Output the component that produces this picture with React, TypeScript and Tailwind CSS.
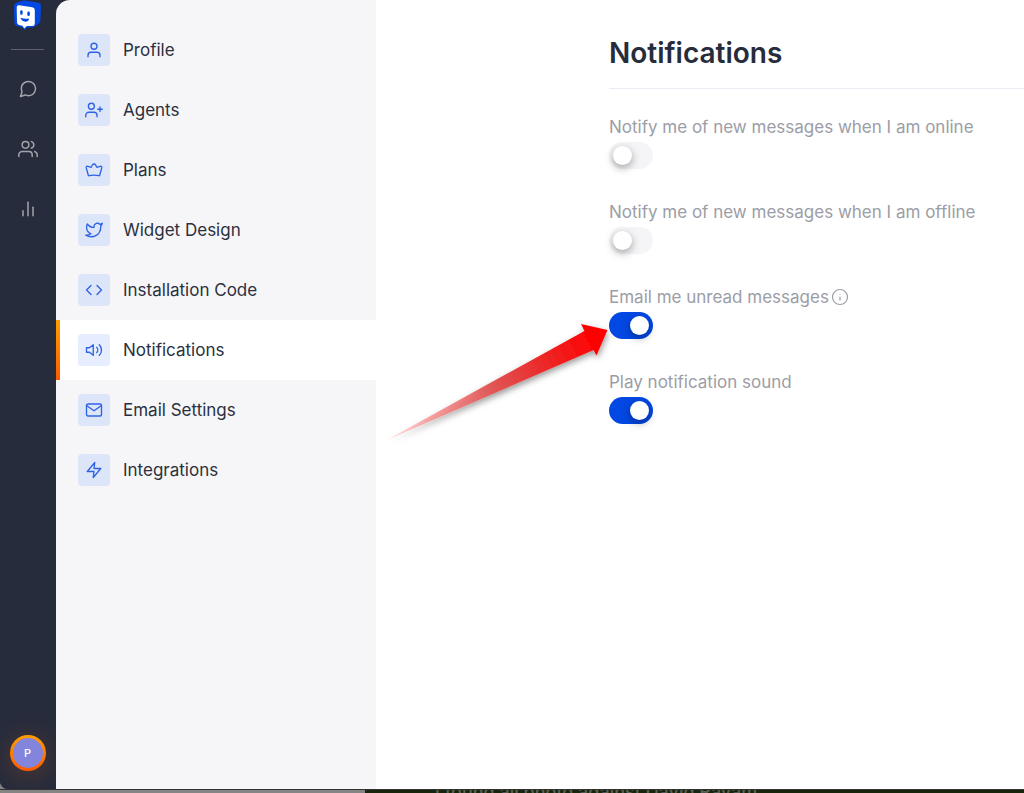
import { useState } from "react";
import {
    FiBarChart2,
    FiCode,
    FiInfo,
    FiMail,
    FiMessageCircle,
    FiTwitter,
    FiUser,
    FiUserPlus,
    FiUsers,
    FiVolume2,
    FiZap,
} from "react-icons/fi";

const CrownIcon = () => (
    <svg viewBox="0 0 24 24" className="size-[18px]" fill="none" stroke="currentColor" strokeWidth="1.6" strokeLinecap="round" strokeLinejoin="round">
        <path d="M5.4 19.6Q4.6 19.8 4.4 19L1.7 9.2C1.3 7.4 2.2 6.6 3.8 7.1L8.2 8.4 9.8 5.4C10.8 3.6 13.2 3.6 14.2 5.4L15.8 8.4 20.2 7.1C21.8 6.6 22.7 7.4 22.3 9.2L19.6 19Q19.4 19.8 18.6 19.6C14.2 18.7 9.800 18.7 5.4 19.6Z" />
    </svg>
);

const Logo = () => (
    <svg viewBox="0 0 27 30" className="h-[30px] w-[27px]" aria-label="Logo">
        <path d="M3 2.5 9.5 0.3 24 2.6Q27 3.2 27 6L26.4 20.5Q26.2 22.5 24.5 23.8L20 26.9 13 27.8 10.3 30 8 27.6 3 26Q0.5 25 0.3 22.5L0 7Q0 3.8 3 2.5Z" fill="#0348e3" />
        <path d="M5 5.2 18.4 7.3Q20.8 7.8 20.8 10V23.5Q20.8 26 18.4 26H12.8L10.4 28.6 8.4 25.8 5 25Q3 24.4 3 22.2L2.7 7.3Q2.8 5 5 5.2Z" fill="#fff" />
        <path d="M7.4 11.4V13.4M14.6 12.8V14.8" stroke="#0348e3" strokeWidth="2.5" strokeLinecap="round" />
        <path d="M6.4 17.8Q11 19.400 15.2 18.600Q14.2 22 11.2 21.8Q7.600 21.400 6.4 17.800Z" fill="#0348e3" />
    </svg>
);

const menu = [
    { name: "Profile", icon: <FiUser /> },
    { name: "Agents", icon: <FiUserPlus /> },
    { name: "Plans", icon: <CrownIcon /> },
    { name: "Widget Design", icon: <FiTwitter /> },
    { name: "Installation Code", icon: <FiCode /> },
    { name: "Notifications", icon: <FiVolume2 /> },
    { name: "Email Settings", icon: <FiMail /> },
    { name: "Integrations", icon: <FiZap /> },
];

const NavRail = () => (
    <nav className="flex w-14 shrink-0 flex-col items-center rounded-bl-lg bg-[#272c3c] pr-px pb-[18px] text-[#a2a4ab]">
        <a href="#home"><Logo /></a>
        <div className="mt-[19px] h-px w-[33px] bg-[#5d616d]" />
        <div className="mt-[29px] flex flex-col gap-10 text-xl">
            <a href="#chats" aria-label="Chats"><FiMessageCircle strokeWidth={1.8} /></a>
            <a href="#contacts" aria-label="Contacts"><FiUsers strokeWidth={1.8} /></a>
            <a href="#reports" aria-label="Reports"><FiBarChart2 strokeWidth={1.8} /></a>
        </div>
        <button className="mt-auto flex size-9 cursor-pointer items-center justify-center rounded-full bg-linear-to-b from-[#ff9d00] to-[#ff5900] shadow-[0_4px_24px_rgba(255,100,0,0.22)]">
            <span className="flex size-[30px] items-center justify-center rounded-full bg-[#8385dc] text-[11px] font-medium text-white">P</span>
        </button>
    </nav>
);

const SettingsMenu = ({ active, setActive }: { active: string; setActive: (name: string) => void }) => (
    <aside className="w-80 shrink-0 rounded-tl-[14px] bg-[#f6f6f8] pt-5">
        {menu.map((item) => (
            <button
                key={item.name}
                onClick={() => setActive(item.name)}
                className={`relative flex h-[60px] w-full cursor-pointer items-center gap-[13px] pl-[22px] text-left text-[17px] text-[#2b3040] ${active === item.name ? "bg-white" : ""}`}
            >
                {active === item.name && <span className="absolute inset-y-0 left-0 w-1 bg-linear-to-b from-[#ff9d00] to-[#ff5900]" />}
                <span className={`flex size-8 items-center justify-center rounded-sm text-lg text-[#2f63e6] [&_svg]:stroke-[1.8] ${active === item.name ? "bg-[#e5edff]" : "bg-[#dde6f9]"}`}>
                    {item.icon}
                </span>
                <span className="pt-0.5">{item.name}</span>
            </button>
        ))}
    </aside>
);

// red pointer that leads to the unread messages switch
const Pointer = () => (
    <svg viewBox="0 0 230 140" className="pointer-events-none absolute top-0 right-full h-[140px] w-[230px] overflow-visible">
        <defs>
            <linearGradient id="pointer" gradientUnits="userSpaceOnUse" x1="6" y1="129" x2="228" y2="18">
                <stop offset="0" stopColor="#ff8080" stopOpacity="0.15" />
                <stop offset="0.2" stopColor="#f58080" stopOpacity="0.7" />
                <stop offset="0.48" stopColor="#e05656" />
                <stop offset="0.7" stopColor="#eb2a2a" />
                <stop offset="0.95" stopColor="#ff0000" />
            </linearGradient>
            <filter id="pointer-shadow" x="-10%" y="-10%" width="120%" height="130%">
                <feDropShadow dx="1" dy="3" stdDeviation="3" floodColor="#000" floodOpacity="0.4" />
            </filter>
        </defs>
        <path d="M6 129 205.5 19 202 12 228.5 18 217.5 43.5 214.5 38Z" fill="url(#pointer)" filter="url(#pointer-shadow)" />
    </svg>
);

type SwitchRowProps = {
    id: string;
    label: string;
    defaultOn?: boolean;
    info?: boolean;
    pointer?: boolean;
};

const SwitchRow = ({ id, label, defaultOn = false, info, pointer }: SwitchRowProps) => {
    const [on, setOn] = useState<boolean>(defaultOn);

    return (
        <div className="flex flex-col items-start gap-[3px]">
            <div className="flex h-6 items-center gap-0.5 text-[17px] text-[#9c9da6]">
                <label htmlFor={id} className="pt-0.5">{label}</label>
                {info && <FiInfo className="text-lg" strokeWidth={1.6} />}
            </div>
            <div className="relative flex">
                {pointer && <Pointer />}
                <input
                    id={id}
                    type="checkbox"
                    role="switch"
                    checked={on}
                    onChange={() => setOn(!on)}
                    className="h-[27px] w-11 cursor-pointer appearance-none rounded-full bg-[#f5f5f8] p-1 before:block before:size-[19px] before:rounded-full before:bg-white before:shadow-[0_3px_8px_rgba(0,0,0,0.35)] checked:bg-[#0348e3] checked:pl-[21px]"
                />
            </div>
        </div>
    );
};

const App: React.FC = () => {
    const [active, setActive] = useState<string>("Notifications");

    return (
        <div className="flex h-screen flex-col overflow-hidden bg-[#858585] font-['Inter',sans-serif]">
            <div className="flex min-h-0 flex-1 rounded-bl-lg">
                <div className="flex rounded-bl-lg bg-[#272c3c]">
                    <NavRail />
                    <SettingsMenu active={active} setActive={setActive} />
                </div>

                <main className="min-w-0 flex-1 bg-white pt-8 pl-[233px]">
                    <h1 className="h-[57px] border-b border-[#ebebf3] text-[28px] leading-[42px] font-semibold text-[#272c3c]">Notifications</h1>
                    <div className="mt-[26px] flex flex-col gap-[31px]">
                        <SwitchRow id="online" label="Notify me of new messages when I am online" />
                        <SwitchRow id="offline" label="Notify me of new messages when I am offline" />
                        <SwitchRow id="unread" label="Email me unread messages" defaultOn info pointer />
                        <SwitchRow id="sound" label="Play notification sound" defaultOn />
                    </div>
                </main>
            </div>

            <footer className="flex h-1 shrink-0 border-t border-[#333333]">
                <div className="ml-[365px] flex flex-1 items-center overflow-hidden bg-[#17260b] pl-[70px] text-lg font-medium whitespace-nowrap text-[#5c6158]">
                    I found all photo against David Ravam...
                </div>
            </footer>
        </div>
    );
};

export default App;
